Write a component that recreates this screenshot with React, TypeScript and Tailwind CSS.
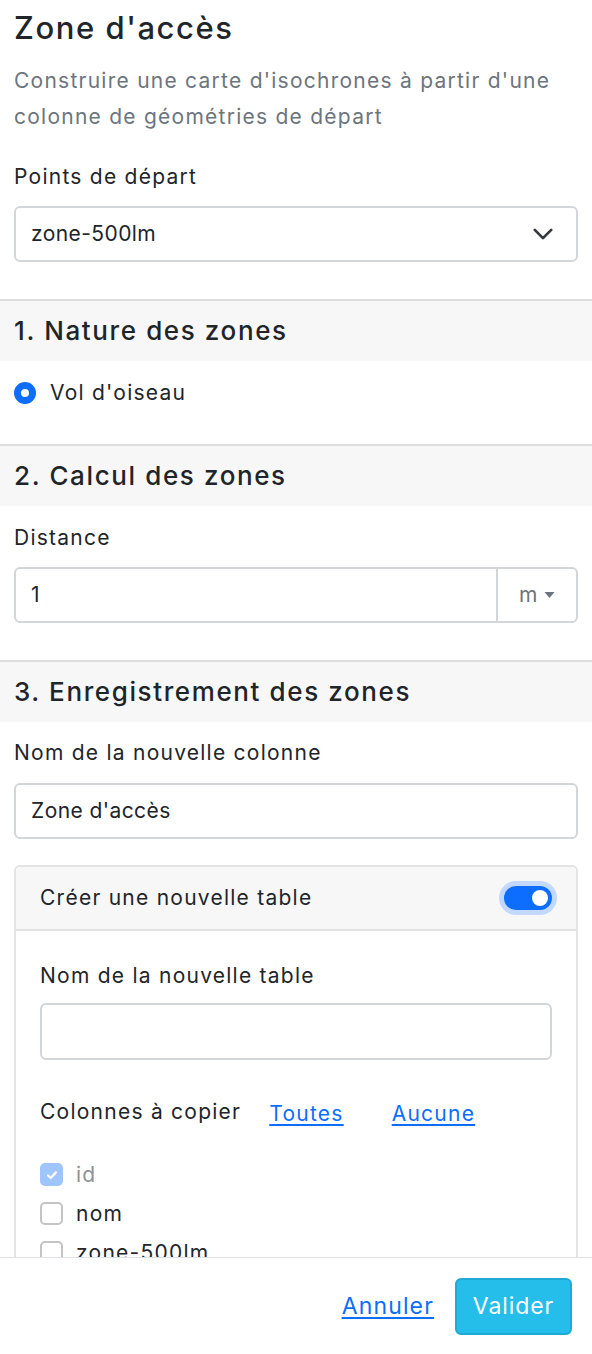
import React from "react";

// ── Section header band ───────────────────────────────────────────────────────
function SectionHeader({ children }: { children: React.ReactNode }) {
    return (
        <div className="border-t-2 border-[#dedede] bg-[#f7f7f7] h-[62px] flex items-center px-[14px]">
            <h2 className="text-[26px] font-medium text-[#212529] leading-none tracking-[0.062em]">{children}</h2>
        </div>
    );
}

function Label({ children, className = "" }: { children: React.ReactNode; className?: string }) {
    return <div className={"text-[21px] leading-[30px] text-[#212529] " + className}>{children}</div>;
}

function CheckRow({ label, checked, disabled }: { label: string; checked?: boolean; disabled?: boolean }) {
    return (
        <div className="flex items-center gap-[13px] h-[39px]">
            {checked ? (
                <span className="w-[23px] h-[23px] rounded-[5px] bg-[#9ec5fe] flex items-center justify-center shrink-0">
                    <svg viewBox="0 0 16 16" className="w-[14px] h-[14px]" fill="none" stroke="white" strokeWidth="2.6" strokeLinecap="round" strokeLinejoin="round">
                        <path d="M3.5 8.5l3 3 6-6.5" />
                    </svg>
                </span>
            ) : (
                <span className="w-[23px] h-[23px] rounded-[5px] border-2 border-[#c4c4c4] bg-white shrink-0" />
            )}
            <span className={"text-[21px] " + (disabled ? "text-[#8f9296]" : "text-[#212529]")}>{label}</span>
        </div>
    );
}

export default function App() {
    return (
        <div
            className="w-[592px] h-[1354px] flex flex-col bg-white overflow-hidden tracking-[0.078em]"
            style={{ fontFamily: "Inter, 'Noto Sans', 'Liberation Sans', sans-serif" }}
        >
            {/* Scrollable body */}
            <div className="flex-1 overflow-hidden">
                <div className="px-[14px] pt-[10px]">
                    <h1 className="text-[31px] font-medium leading-[36px] text-[#212529] tracking-[0.05em]">Zone d'accès</h1>
                    <p className="mt-[17px] text-[21px] leading-[36px] text-[#6c757d]">
                        Construire une carte d'isochrones à partir d'une colonne de géométries de départ
                    </p>
                    <Label className="mt-[27px]">Points de départ</Label>
                    <div className="mt-[14px] h-[56px] border-2 border-[#d3d6d9] rounded-[6px] flex items-center justify-between pl-[15px] pr-[22px]">
                        <span className="text-[21px] text-[#212529] tracking-[0.02em]">zone-500lm</span>
                        <svg viewBox="0 0 16 16" className="w-[22px] h-[22px]" fill="none" stroke="#343a40" strokeWidth="2" strokeLinecap="round" strokeLinejoin="round">
                            <path d="M2 5l6 6 6-6" />
                        </svg>
                    </div>
                </div>

                <div className="mt-[37px]">
                    <SectionHeader>1. Nature des zones</SectionHeader>
                    <div className="px-[14px] pt-[17px] pb-[36px]">
                        <label className="flex items-center gap-[14px] h-[30px]">
                            <span className="w-[22px] h-[22px] rounded-full border-[7px] border-[#0d6efd] bg-white shrink-0" />
                            <span className="text-[21px] text-[#212529]">Vol d'oiseau</span>
                        </label>
                    </div>
                </div>

                <div>
                    <SectionHeader>2. Calcul des zones</SectionHeader>
                    <div className="px-[14px] pt-[17px] pb-[37px]">
                        <Label>Distance</Label>
                        <div className="mt-[14px] h-[56px] border-2 border-[#d3d6d9] rounded-[6px] flex">
                            <div className="flex-1 flex items-center pl-[15px] text-[21px] text-[#212529] tracking-[0.02em]">1</div>
                            <div className="w-[80px] border-l-2 border-[#d3d6d9] flex items-center justify-center gap-[6px] text-[21px] text-[#6c757d] tracking-[0.02em]">
                                <span>m</span>
                                <svg viewBox="0 0 10 6" className="w-[11px] h-[6px]" fill="#6c757d">
                                    <path d="M0 0h10L5 6z" />
                                </svg>
                            </div>
                        </div>
                    </div>
                </div>

                <div>
                    <SectionHeader>3. Enregistrement des zones</SectionHeader>
                    <div className="px-[14px] pt-[16px]">
                        <Label>Nom de la nouvelle colonne</Label>
                        <div className="mt-[15px] h-[56px] border-2 border-[#d3d6d9] rounded-[6px] flex items-center pl-[15px] text-[21px] text-[#212529] tracking-[0.02em]">
                            Zone d'accès
                        </div>

                        {/* Card */}
                        <div className="mt-[26px] border-2 border-[#e3e3e3] rounded-[6px]">
                            <div className="bg-[#f7f7f7] h-[64px] border-b-2 border-[#e3e3e3] flex items-center justify-between pl-[24px] pr-[19px] rounded-t-[6px]">
                                <span className="text-[21px] text-[#212529]">Créer une nouvelle table</span>
                                <span className="w-[58px] h-[34px] rounded-full bg-[#c2d8fd] flex items-center justify-center">
                                    <span className="w-[48px] h-[24px] rounded-full bg-[#0d6efd] flex items-center justify-end pr-[4px]">
                                        <span className="w-[16px] h-[16px] rounded-full bg-white" />
                                    </span>
                                </span>
                            </div>
                            <div className="px-[24px] pt-[30px] pb-[20px]">
                                <Label>Nom de la nouvelle table</Label>
                                <div className="mt-[12px] h-[57px] border-2 border-[#d3d6d9] rounded-[6px]" />
                                <div className="mt-[37px] flex items-center h-[30px]">
                                    <span className="text-[21px] text-[#212529]">Colonnes à copier</span>
                                    <a className="ml-[28px] text-[21px] text-[#0d6efd] underline underline-offset-[3px] mt-[4px]">Toutes</a>
                                    <a className="ml-[48px] text-[21px] text-[#0d6efd] underline underline-offset-[3px] mt-[4px]">Aucune</a>
                                </div>
                                <div className="mt-[28px]">
                                    <CheckRow label="id" checked disabled />
                                    <CheckRow label="nom" />
                                    <CheckRow label="zone-500lm" />
                                </div>
                            </div>
                        </div>
                    </div>
                </div>
            </div>

            {/* Footer */}
            <div className="h-[97px] shrink-0 border-t border-[#dee2e6] flex items-center justify-end gap-[21px] pr-[20px]">
                <a className="text-[23px] text-[#0d6efd] underline underline-offset-[3px] tracking-[0.05em]">Annuler</a>
                <button className="h-[57px] w-[117px] rounded-[6px] bg-[#25bde9] border-2 border-[#1fa9d3] text-white text-[23px] tracking-[0.04em]">
                    Valider
                </button>
            </div>
        </div>
    );
}
